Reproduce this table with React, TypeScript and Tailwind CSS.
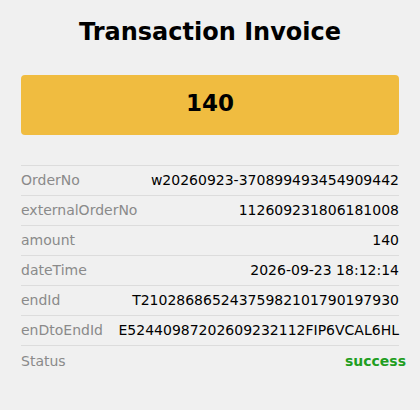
const rows = [
  { label: "OrderNo", value: "w20260923-370899493454909442" },
  { label: "externalOrderNo", value: "112609231806181008" },
  { label: "amount", value: "140" },
  { label: "dateTime", value: "2026-09-23 18:12:14" },
  { label: "endId", value: "T21028686524375982101790197930" },
  { label: "enDtoEndId", value: "E52440987202609232112FIP6VCAL6HL" },
]

export default function App() {
  return (
    <div className="w-[420px] h-[410px] bg-[#f0f0f0] px-[21px] pt-[15px] font-['DejaVu_Sans',sans-serif]">
      <h1 className="text-center text-[24px] leading-[34px] font-bold text-black">Transaction Invoice</h1>

      <div className="mt-[26px] h-[60px] rounded-[4px] bg-[#f0bc40] flex items-center justify-center pb-[4px]">
        <span className="text-[23px] font-bold text-black">140</span>
      </div>

      <div className="mt-[30px] border-t border-[#dcdcdc]">
        {rows.map((r) => (
          <div key={r.label} className="h-[30px] flex items-center justify-between border-b border-[#dcdcdc] text-[14px]">
            <span className="text-[#8a8a8a]">{r.label}</span>
            <span className="text-black">{r.value}</span>
          </div>
        ))}
        <div className="h-[30px] flex items-center justify-between text-[14px]">
          <span className="text-[#8a8a8a]">Status</span>
          <span className="font-bold text-[#1f9e1f] mr-[-7px]">success</span>
        </div>
      </div>
    </div>
  )
}
